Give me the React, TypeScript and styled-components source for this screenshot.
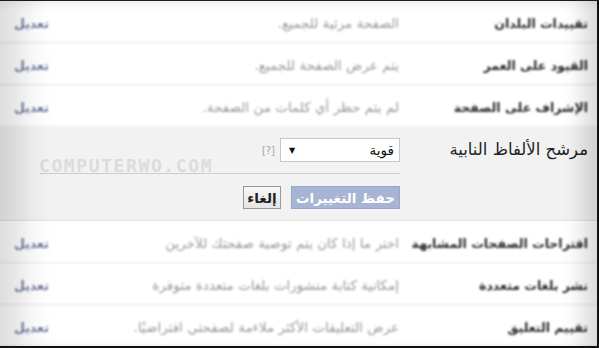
import React from "react";
import styled, { createGlobalStyle } from "styled-components";

const Global = createGlobalStyle`
  html, body { margin: 0; padding: 0; background: #ffffff; }
  * { box-sizing: border-box; }
`;

const Frame = styled.div`
  position: relative;
  width: 599px;
  height: 348px;
  overflow: hidden;
  direction: rtl;
  background: #ffffff;
  border-top: 1px solid #1b1b1b;
  border-right: 2px solid #111111;
  border-bottom: 2px solid #111111;
  font-family: "DejaVu Sans", Tahoma, sans-serif;
`;

const Row = styled.div`
  display: flex;
  align-items: center;
  height: 42px;
  padding-top: 3px;
  border-bottom: 1px solid #e6e6e6;
  filter: blur(1.1px);
  &:last-child { border-bottom: none; }
`;

const Label = styled.div`
  flex: 0 0 187px;
  padding-right: 9px;
  font-size: 12.5px;
  font-weight: bold;
  color: #2b2b2b;
  white-space: nowrap;
`;

const Desc = styled.div`
  flex: 1;
  padding-right: 11px;
  font-size: 13.5px;
  color: #9a9a9a;
  white-space: nowrap;
`;

const Edit = styled.a`
  margin-left: 14px;
  font-size: 12.5px;
  font-weight: bold;
  color: #737ca0;
  text-decoration: none;
`;

const Section = styled.div`
  position: relative;
  display: flex;
  height: 94px;
  padding-top: 11px;
  background: #f2f2f2;
  border-bottom: 1px solid #e2e2e2;
`;

const SectionLabel = styled.div`
  flex: 0 0 187px;
  padding-right: 9px;
  line-height: 24px;
  font-size: 16.5px;
  color: #1e1e1e;
  white-space: nowrap;
`;

const Content = styled.div`
  width: 360px;
  margin-right: 10px;
  display: flex;
  flex-direction: column;
  align-items: flex-start;
`;

const SelectRow = styled.div`
  display: flex;
  align-items: center;
`;

const SelectBox = styled.div`
  width: 120px;
  height: 24px;
  display: flex;
  align-items: center;
  justify-content: space-between;
  padding: 0 5px 0 8px;
  background: #ffffff;
  border: 1px solid #bdc7d8;
  font-size: 13.5px;
  color: #111111;
`;

const Arrow = styled.span`
  font-size: 8px;
  color: #111111;
`;

const Help = styled.span`
  margin-right: 5px;
  font-size: 10px;
  color: #a8a8a8;
  direction: ltr;
`;

const Divider = styled.div`
  width: 360px;
  height: 1px;
  margin-top: 11px;
  background: #cccccc;
`;

const Buttons = styled.div`
  display: flex;
  gap: 10px;
  margin-top: 12px;
`;

const Button = styled.button<{ $primary?: boolean }>`
  width: ${(p) => (p.$primary ? "109px" : "38px")};
  height: 23px;
  padding: 0;
  font-family: "DejaVu Sans", Tahoma, sans-serif;
  font-size: 13.5px;
  font-weight: bold;
  border: 1px solid ${(p) => (p.$primary ? "#9aa8c8" : "#999999")};
  color: ${(p) => (p.$primary ? "#ffffff" : "#222222")};
  background: ${(p) =>
    p.$primary ? "#a7b4d3" : "linear-gradient(#f7f7f7, #e4e4e4)"};
  cursor: pointer;
`;

const Watermark = styled.div`
  position: absolute;
  left: 39px;
  top: 28px;
  direction: ltr;
  font-family: "DejaVu Sans Mono", monospace;
  font-weight: bold;
  font-size: 18px;
  letter-spacing: 1.6px;
  color: #dcdcdc;
  pointer-events: none;
`;

const Vignette = styled.div`
  position: absolute;
  inset: 0;
  pointer-events: none;
  box-shadow: inset 44px 0 34px -24px rgba(0, 0, 0, 0.15),
    inset -30px 0 22px -16px rgba(0, 0, 0, 0.15),
    inset 0 12px 12px -10px rgba(0, 0, 0, 0.06);
`;

type Item = { label: string; desc: string };

const top: Item[] = [
  { label: "تقييدات البلدان", desc: "الصفحة مرئية للجميع." },
  { label: "القيود على العمر", desc: "يتم عرض الصفحة للجميع." },
  { label: "الإشراف على الصفحة", desc: "لم يتم حظر أي كلمات من الصفحة." },
];

const bottom: Item[] = [
  { label: "اقتراحات الصفحات المشابهة", desc: "اختر ما إذا كان يتم توصية صفحتك للآخرين" },
  { label: "نشر بلغات متعددة", desc: "إمكانية كتابة منشورات بلغات متعددة متوفرة" },
  { label: "تقييم التعليق", desc: "عرض التعليقات الأكثر ملاءمة لصفحتي افتراضيًا." },
];

const SettingRow = ({ label, desc }: Item) => (
  <Row>
    <Label>{label}</Label>
    <Desc>{desc}</Desc>
    <Edit href="#">تعديل</Edit>
  </Row>
);

export default function App() {
  return (
    <>
      <Global />
      <Frame>
        {top.map((r) => (
          <SettingRow key={r.label} {...r} />
        ))}
        <Section>
          <SectionLabel>مرشح الألفاظ النابية</SectionLabel>
          <Content>
            <SelectRow>
              <SelectBox>
                <span>قوية</span>
                <Arrow>▼</Arrow>
              </SelectBox>
              <Help>[?]</Help>
            </SelectRow>
            <Divider />
            <Buttons>
              <Button $primary>حفظ التغييرات</Button>
              <Button>إلغاء</Button>
            </Buttons>
          </Content>
          <Watermark>COMPUTERWO.COM</Watermark>
        </Section>
        {bottom.map((r) => (
          <SettingRow key={r.label} {...r} />
        ))}
        <Vignette />
      </Frame>
    </>
  );
}
